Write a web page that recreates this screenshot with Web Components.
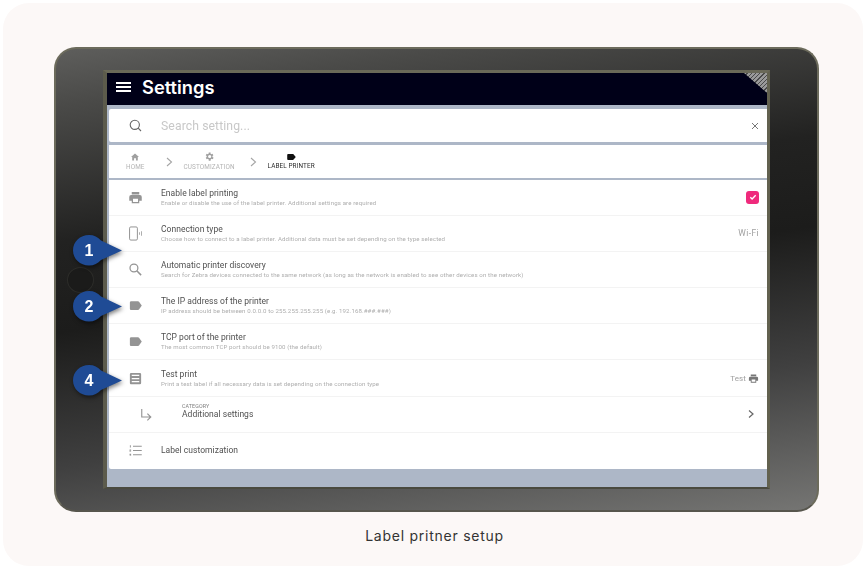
<!DOCTYPE html>
<html>
<head>
<meta charset="utf-8">
<style>
	html, body { margin: 0; padding: 0; background: #fff; }
	body { width: 865px; height: 569px; overflow: hidden; font-family: "Roboto", "Liberation Sans", sans-serif; }
</style>
</head>
<body>
<tablet-figure caption="Label pritner setup">
	<settings-header title-text="Settings"></settings-header>
	<search-bar placeholder="Search setting..."></search-bar>
	<crumb-bar></crumb-bar>
	<settings-list>
		<setting-row icon="print" heading="Enable label printing" sub="Enable or disable the use of the label printer. Additional settings are required"><pink-check></pink-check></setting-row>
		<setting-row icon="phone" heading="Connection type" sub="Choose how to connect to a label printer. Additional data must be set depending on the type selected">Wi-Fi</setting-row>
		<setting-row icon="search" heading="Automatic printer discovery" sub="Search for Zebra devices connected to the same network (as long as the network is enabled to see other devices on the network)"></setting-row>
		<setting-row icon="label" heading="The IP address of the printer" sub="IP address should be between 0.0.0.0 to 255.255.255.255 (e.g. 192.168.###.###)"></setting-row>
		<setting-row icon="label" heading="TCP port of the printer" sub="The most common TCP port should be 9100 (the default)"></setting-row>
		<setting-row icon="note" heading="Test print" sub="Print a test label if all necessary data is set depending on the connection type"><test-action></test-action></setting-row>
		<setting-row icon="subdir" kind="category" heading="Additional settings" sub="CATEGORY"><svg style="margin-right:4px" width="7" height="10" viewBox="0 0 7 10" fill="none" stroke="#666" stroke-width="1.2"><path d="M1 1.500L5 5 1 8.500"/></svg></setting-row>
		<setting-row icon="list" heading="Label customization" last></setting-row>
	</settings-list>
</tablet-figure>

<script>
	const ICONS = {
		print: '<path d="M19 8H5a3 3 0 0 0-3 3v6h4v4h12v-4h4v-6a3 3 0 0 0-3-3zm-3 11H8v-5h8v5zM18 3H6v4h12V3z"/>',
		phone: '<rect x="2.500" y="1.500" width="12.500" height="21" rx="2" fill="none" stroke="currentColor" stroke-width="1.600"/><path d="M18 10h1.200v4H18zM21 8.500h1.200v7H21z"/>',
		search: '<circle cx="9.500" cy="9.500" r="6.300" fill="none" stroke="currentColor" stroke-width="2"/><path d="M14 14l7 7" fill="none" stroke="currentColor" stroke-width="2.400"/>',
		label: '<path d="M17.600 5.800A2 2 0 0 0 16 5L5 5a2 2 0 0 0-2 2v10c0 1.100.9 2 2 2h11c.7 0 1.200-.3 1.600-.8L22 12l-4.400-6.200z"/>',
		note: '<path d="M19 3H5a2 2 0 0 0-2 2v14c0 1.100.9 2 2 2h14a2 2 0 0 0 2-2V5a2 2 0 0 0-2-2zm-1 15H6v-2h12v2zm0-5H6v-2h12v2zm0-5H6V6h12v2z"/>',
		subdir: '<path fill="none" stroke="currentColor" stroke-width="1.800" d="M6 3v13h14M15 10.500l5.500 5.500-5.500 5.500"/>',
		list: '<path d="M8 4.500h14V6H8zM8 11.200h14v1.500H8zM8 18h14v1.500H8zM3 3.500h1.500v3.500H3zM2.500 10.500H5v2H3.500v.7H5v.8H2.500zM2.500 17H5v3.500H2.500v-.8H4v-.6H2.500z"/>'
	};
	const PRINTER = ICONS.print;

	class TabletFigure extends HTMLElement {
		constructor() {
			super();
			this.attachShadow({mode: "open"}).innerHTML = `
				<style>
					:host { display: block; width: 860px; height: 563px; margin: 3px 0 0 3px; background: #fcf8f7; border-radius: 26px; }
					.wrap { display: flex; flex-direction: column; padding: 44px 0 0 51px; }
					.tablet { box-sizing: border-box; width: 765px; height: 465px; padding: 21px 47px; border-radius: 22px;
						border: 2px solid #6c6b5c; border-bottom-color: #57564d;
						background: linear-gradient(172deg, #5e5e5c 0%, #4a4a48 10%, #222221 34%, #1c1c1b 50%, #404040 74%, #757573 100%); position: relative; }
					.screen { box-sizing: border-box; height: 100%; border-style: solid; border-width: 3px 3px 2px 4px; border-color: #6a6958 #62614f #4a4a3f #5c5b4c; background: #adb7c7; display: flex; flex-direction: column; position: relative; overflow: hidden; }
					.blur { display: flex; flex-direction: column; height: 100%; filter: blur(0.55px); }
					.home { position: absolute; left: 11px; top: 218px; width: 27px; height: 26px; box-sizing: border-box; border-radius: 50%; border: 1px solid #2c2c29; background: #1b1b1a; }
					.cap { width: 761px; text-align: center; font: 400 14px "Inter", "Liberation Sans", sans-serif; letter-spacing: .75px; color: #333; margin-top: 15px; }
					.corner { position: absolute; right: 0; top: 0; width: 23px; height: 20px; background: repeating-linear-gradient(135deg, #9a9a9a 0 2px, #4a4a4a 2px 3px); clip-path: polygon(0 0, 100% 0, 100% 100%); }
				</style>
				<div class="wrap">
					<div class="tablet">
						<div class="screen"><div class="blur"><slot></slot></div><div class="corner"></div></div>
						<div class="home"></div>
						<call-out n="1" style="left:17px;top:186px"></call-out>
						<call-out n="2" style="left:17px;top:242px"></call-out>
						<call-out n="4" style="left:17px;top:316px"></call-out>
					</div>
					<div class="cap"></div>
				</div>`;
			this.shadowRoot.querySelector(".cap").textContent = this.getAttribute("caption");
		}
	}
	customElements.define("tablet-figure", TabletFigure);

	class CallOut extends HTMLElement {
		constructor() {
			super();
			this.attachShadow({mode: "open"}).innerHTML = `
				<style>
					:host { display: block; position: absolute; width: 50px; height: 31px; filter: drop-shadow(1px 2px 2px rgba(0,0,0,.5)); }
					svg { position: absolute; left: 0; top: 0; }
					span { position: absolute; left: 0; top: 0; width: 32px; height: 31px; text-align: center; font: 700 16px/31px "Liberation Sans", sans-serif; color: #fff; }
				</style>
				<svg width="50" height="31" viewBox="0 0 50 31"><path fill="#1f4b95" d="M16 0C21 0 25 2 28 5.500L49 15.500 28 25C25 28.500 21 30.500 16 30.500 7 30.500 0 24 0 15.300S7 0 16 0z"/></svg>
				<span>${this.getAttribute("n")}</span>`;
		}
	}
	customElements.define("call-out", CallOut);

	class SettingsHeader extends HTMLElement {
		constructor() {
			super();
			this.attachShadow({mode: "open"}).innerHTML = `
				<style>
					:host { display: flex; align-items: center; flex: none; box-sizing: border-box; height: 32px; padding: 0 0 4px 9px; background: #000018; color: #fff; }
					.burger { width: 15px; height: 10px; border-top: 2px solid #fff; border-bottom: 2px solid #fff; position: relative; margin-right: 11px; box-sizing: border-box; }
					.burger::after { content: ""; position: absolute; left: 0; right: 0; top: 2px; height: 2px; background: #fff; }
					b { font: 600 18.300px "Inter", "Roboto", sans-serif; }
				</style>
				<div class="burger"></div><b>${this.getAttribute("title-text")}</b>`;
		}
	}
	customElements.define("settings-header", SettingsHeader);

	class SearchBar extends HTMLElement {
		constructor() {
			super();
			this.attachShadow({mode: "open"}).innerHTML = `
				<style>
					:host { display: flex; align-items: center; flex: none; height: 33px; margin: 4px 0 3px 2px; background: #fff; border-radius: 2px 0 0 2px; box-sizing: border-box; padding: 0 8px 0 20px; }
					svg { flex: none; }
					span { flex: 1; margin-left: 19px; font: 400 12.200px "Roboto", sans-serif; letter-spacing: .1px; color: #c8c8c8; }
				</style>
				<svg width="13" height="13" viewBox="0 0 13 13" fill="none" stroke="#666" stroke-width="1.100"><circle cx="5.800" cy="5.800" r="4.600"/><path d="M9.200 9.200L12 12"/></svg>
				<span>${this.getAttribute("placeholder")}</span>
				<svg width="8" height="8" viewBox="0 0 8 8" fill="none" stroke="#777" stroke-width="1"><path d="M1 1l6 6M7 1L1 7"/></svg>`;
		}
	}
	customElements.define("search-bar", SearchBar);

	class CrumbBar extends HTMLElement {
		constructor() {
			super();
			this.attachShadow({mode: "open"}).innerHTML = `
				<style>
					:host { display: flex; align-items: center; flex: none; height: 32.500px; margin: 0 0 2px 2px; padding: 1px 0 0 17px; background: #fff; box-sizing: border-box; }
					.c { display: flex; flex-direction: column; align-items: center; gap: 2px; font: 400 6.400px "Roboto", sans-serif; letter-spacing: .1px; color: #b3b3b3; }
					.c.on { color: #2a2a2a; }
					.c svg { display: block; }
					.sep { margin: 0 11px 0 21px; }
				</style>
				<div class="c"><svg width="8" height="8" viewBox="0 0 10 9" fill="#a0a0a0"><path d="M5 0L0 4.500h1.500V9h2.300V6h2.400v3h2.300V4.500H10z"/></svg>HOME</div>
				<svg class="sep" width="7" height="10" viewBox="0 0 7 10" fill="none" stroke="#a5a5a5" stroke-width="1.100"><path d="M1 1l4.500 4L1 9"/></svg>
				<div class="c"><svg style="margin:-1.500px 0" width="11" height="11" viewBox="1 0 24 24" fill="#a0a0a0"><path d="M19.400 13c.1-.3.1-.7.1-1s0-.7-.1-1l2.100-1.600-2-3.500-2.500 1a7 7 0 0 0-1.700-1L15.400 3h-4l-.4 2.900c-.6.200-1.200.6-1.700 1l-2.500-1-2 3.500L6.900 11c-.1.300-.1.700-.1 1s0 .7.100 1l-2.100 1.600 2 3.500 2.500-1c.5.400 1.100.8 1.700 1l.4 2.900h4l.4-2.900c.6-.2 1.200-.6 1.700-1l2.500 1 2-3.500zM13.400 15.500a3.500 3.500 0 1 1 0-7 3.500 3.500 0 0 1 0 7z"/></svg>CUSTOMIZATION</div>
				<svg class="sep" style="margin-left:15px" width="7" height="10" viewBox="0 0 7 10" fill="none" stroke="#a5a5a5" stroke-width="1.100"><path d="M1 1l4.500 4L1 9"/></svg>
				<div class="c on"><svg width="9" height="6" viewBox="0 0 10 7" fill="#111"><path d="M1 0h5.500c.5 0 .8.200 1 .5L10 3.500 7.500 6.500c-.2.300-.5.500-1 .5H1C.4 7 0 6.600 0 6V1C0 .4.400 0 1 0z"/></svg>LABEL PRINTER</div>`;
		}
	}
	customElements.define("crumb-bar", CrumbBar);

	class SettingsList extends HTMLElement {
		constructor() {
			super();
			this.attachShadow({mode: "open"}).innerHTML = `
				<style>:host { display: block; flex: none; margin-left: 2px; background: #fff; border-radius: 0 0 0 2px; }</style><slot></slot>`;
		}
	}
	customElements.define("settings-list", SettingsList);

	class SettingRow extends HTMLElement {
		constructor() {
			super();
			const cat = this.getAttribute("kind") === "category";
			const sub = this.getAttribute("sub");
			const head = `<div class="h">${this.getAttribute("heading")}</div>`;
			const small = sub ? `<div class="s">${sub}</div>` : "";
			this.attachShadow({mode: "open"}).innerHTML = `
				<style>
					:host { display: flex; align-items: center; box-sizing: border-box; height: 36.200px; padding: 0 8px 0 18.500px; border-bottom: 1px solid #f3f3f3; color: #949494; }
					:host([last]) { border-bottom: 0; padding-bottom: 1px; }
					.ic { flex: none; width: 15px; height: 15px; ${cat ? "margin-left: 10px; margin-right: 29.500px;" : "margin-right: 18.500px;"} }
					.t { flex: 1; min-width: 0; }
					.t.cat { margin-bottom: 6px; }
					.h { font: 400 8.500px/10px "Roboto", sans-serif; letter-spacing: .03px; color: #505050; white-space: nowrap; }
					.s { font: 400 6.100px/9px "Roboto", sans-serif; letter-spacing: .12px; color: #aeaeae; white-space: nowrap; }
					.cat .s { font-size: 5.300px; line-height: 6px; color: #7d7d7d; }
					.end { flex: none; display: flex; align-items: center; font: 400 8.500px "Roboto", sans-serif; letter-spacing: .4px; color: #a0a0a0; }
				</style>
				<svg class="ic" viewBox="0 0 24 24" fill="currentColor">${ICONS[this.getAttribute("icon")]}</svg>
				<div class="t ${cat ? "cat" : ""}">${cat ? small + head : head + small}</div>
				<div class="end"><slot></slot></div>`;
		}
	}
	customElements.define("setting-row", SettingRow);

	class PinkCheck extends HTMLElement {
		constructor() {
			super();
			this.attachShadow({mode: "open"}).innerHTML = `
				<style>:host { display: flex; align-items: center; justify-content: center; width: 13px; height: 13px; background: #ef2a7c; border-radius: 3px; }</style>
				<svg width="8" height="8" viewBox="0 0 9 9" fill="none" stroke="#fff" stroke-width="1.500"><path d="M1.500 4.800l2 2L7.500 2.500"/></svg>`;
		}
	}
	customElements.define("pink-check", PinkCheck);

	class TestAction extends HTMLElement {
		constructor() {
			super();
			this.attachShadow({mode: "open"}).innerHTML = `
				<style>:host { display: flex; align-items: center; gap: 2px; font: 400 8px "Roboto", sans-serif; letter-spacing: .1px; color: #a0a0a0; }</style>
				Test<svg width="11" height="11" viewBox="0 0 24 24" fill="#777">${PRINTER}</svg>`;
		}
	}
	customElements.define("test-action", TestAction);
</script>
</body>
</html>
